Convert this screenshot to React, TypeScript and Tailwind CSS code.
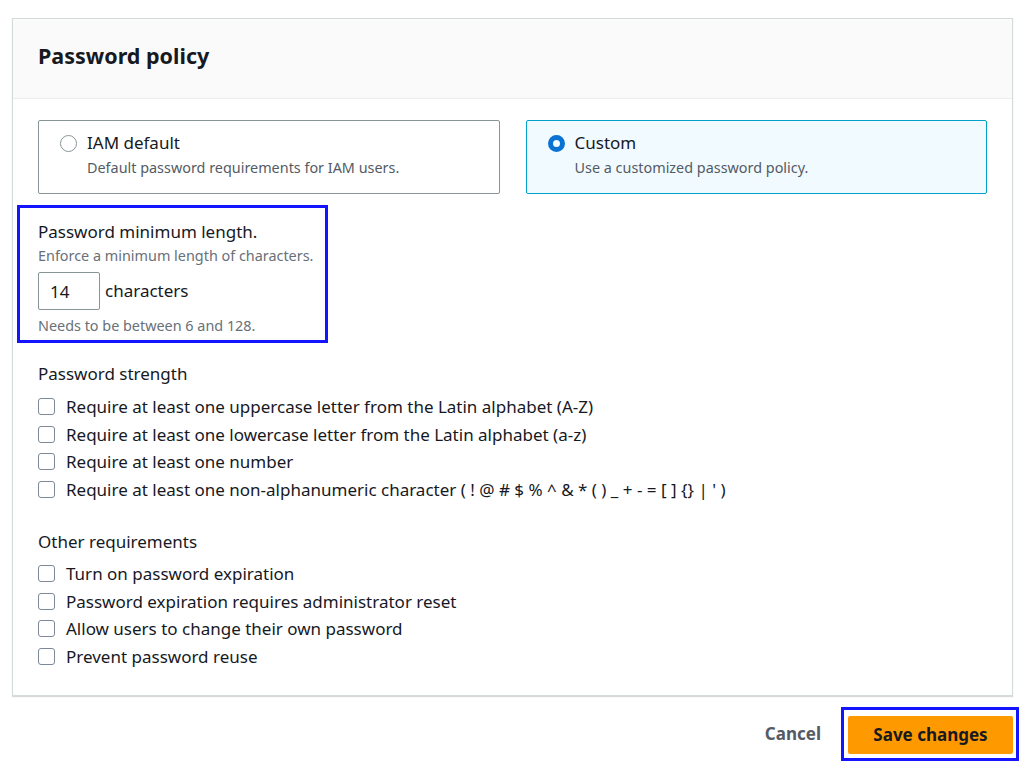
import { useState } from "react";

const strength = [
  "Require at least one uppercase letter from the Latin alphabet (A-Z)",
  "Require at least one lowercase letter from the Latin alphabet (a-z)",
  "Require at least one number",
  "Require at least one non-alphanumeric character ( ! @ # $ % ^ & * ( ) _ + - = [ ] {} | ' )",
];

const other = [
  "Turn on password expiration",
  "Password expiration requires administrator reset",
  "Allow users to change their own password",
  "Prevent password reuse",
];

function Check({ label }: { label: string }) {
  const [on, setOn] = useState(false);
  return (
    <label className="flex items-center gap-[11px] h-[27.5px] cursor-pointer">
      <span
        onClick={() => setOn(!on)}
        className={`w-[17px] h-[17px] rounded-[3px] border shrink-0 ${on ? "bg-[#0972d3] border-[#0972d3]" : "bg-white border-[#7d8998]"}`}
      />
      <span className="text-[17px] text-[#16191f]">{label}</span>
    </label>
  );
}

export default function App() {
  const [policy, setPolicy] = useState("custom");
  const [len, setLen] = useState("14");

  return (
    <div className="min-h-screen bg-white pt-[18px] pl-[12px] pr-[19px] font-['Noto_Sans',sans-serif] text-[#16191f]">
      {/* panel */}
      <div className="border border-[#d5dbdb] shadow-[0_1px_1px_rgba(0,0,0,0.15)] bg-white">
        <div className="h-[80px] bg-[#fafafa] border-b border-[#eaeded] flex items-center px-[25px] pb-[5px]">
          <h2 className="text-[21.5px] font-bold">Password policy</h2>
        </div>

        <div className="px-[25px] pt-[21px] pb-[25px]">
          <div className="grid grid-cols-2 gap-[26px]">
            <button
              onClick={() => setPolicy("default")}
              className={`h-[74px] text-left rounded-[2px] border flex items-start gap-[10px] pl-[21px] pt-[10px] ${policy === "default" ? "bg-[#f1faff] border-[#00a1c9]" : "bg-white border-[#879596]"}`}
            >
              <span className={`mt-[4px] w-[17px] h-[17px] rounded-full shrink-0 ${policy === "default" ? "border-[5px] border-[#0972d3]" : "border border-[#879596]"}`} />
              <span className="flex flex-col">
                <span className="text-[17px] leading-[24px]">IAM default</span>
                <span className="text-[14.4px] leading-[26px] text-[#545b64]">Default password requirements for IAM users.</span>
              </span>
            </button>
            <button
              onClick={() => setPolicy("custom")}
              className={`h-[74px] text-left rounded-[2px] border flex items-start gap-[10px] pl-[21px] pt-[10px] ${policy === "custom" ? "bg-[#f1faff] border-[#00a1c9]" : "bg-white border-[#879596]"}`}
            >
              <span className={`mt-[4px] w-[17px] h-[17px] rounded-full shrink-0 ${policy === "custom" ? "border-[5px] border-[#0972d3]" : "border border-[#879596]"}`} />
              <span className="flex flex-col">
                <span className="text-[17px] leading-[24px]">Custom</span>
                <span className="text-[14.4px] leading-[26px] text-[#545b64]">Use a customized password policy.</span>
              </span>
            </button>
          </div>

          {/* min length, highlighted */}
          <div className="-ml-[21px] mt-[11px] w-[311px] border-[3px] border-[#1414ff] pl-[18px] pt-[12px] pb-[4px]">
            <div className="text-[17px] leading-[24px]">Password minimum length.</div>
            <div className="text-[14.4px] leading-[24px] text-[#687078]">Enforce a minimum length of characters.</div>
            <div className="flex items-center gap-[5px] mt-[4px]">
              <input
                value={len}
                onChange={e => setLen(e.target.value)}
                className="w-[62px] h-[38px] border border-[#879596] rounded-[2px] px-[11px] text-[17px] outline-none"
              />
              <span className="text-[17px]">characters</span>
            </div>
            <div className="text-[14.4px] leading-[20px] text-[#687078] mt-[6px]">Needs to be between 6 and 128.</div>
          </div>

          <div className="mt-[19px]">
            <div className="text-[17px] leading-[24px] mb-[7px]">Password strength</div>
            {strength.map(s => <Check key={s} label={s} />)}
          </div>

          <div className="mt-[27px]">
            <div className="text-[17px] leading-[24px] mb-[6px]">Other requirements</div>
            {other.map(s => <Check key={s} label={s} />)}
          </div>
        </div>
      </div>

      {/* actions */}
      <div className="flex justify-end items-center gap-[20px] mt-[11px]">
        <button className="text-[17px] font-bold text-[#545b64]">Cancel</button>
        <div className="border-[3px] border-[#1414ff] pt-[6px] pb-[4px] pl-[4px] pr-[3px] -mr-[6px]">
          <button className="w-[165px] h-[38px] rounded-[2px] bg-[#ff9900] text-[17px] font-bold text-[#16191f]">Save changes</button>
        </div>
      </div>
    </div>
  );
}
